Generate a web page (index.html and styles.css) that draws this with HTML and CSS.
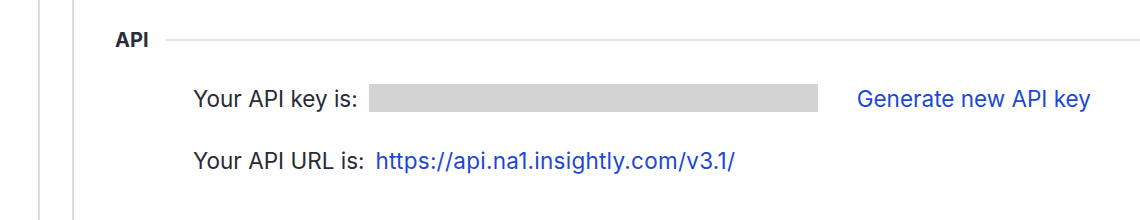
FILE: index.html
```html
<!DOCTYPE html>
<html lang="en">
<head>
    <meta charset="UTF-8">
    <title>API settings</title>
    <link rel="stylesheet" href="styles.css">
</head>
<body>
    <div class="shell">
        <div class="rail">
            <div class="panel">
                <section class="api">
                    <div class="api-head">
                        <h2>API</h2>
                        <span class="rule"></span>
                    </div>
                    <div class="api-rows">
                        <div class="api-row">
                            <span class="label">Your API key is:</span>
                            <span class="key-mask"></span>
                            <a class="link regen" href="#">Generate new API key</a>
                        </div>
                        <div class="api-row">
                            <span class="label">Your API URL is:</span>
                            <a class="link url" href="#">https://api.na1.insightly.com/v3.1/</a>
                        </div>
                    </div>
                </section>
            </div>
        </div>
    </div>
</body>
</html>
```
FILE: styles.css
```css
body {
    margin: 0;
    background-color: white;
    font-family: Inter, "Noto Sans", sans-serif;
    color: #2a2b33;
}

.shell {
    height: 220px;
    padding-left: 38px;
    overflow: hidden;
}

.rail {
    height: 100%;
    border-left: 2px solid #dcdce2;
    padding-left: 32px;
}

.panel {
    height: 100%;
    border-left: 2px solid #dcdce2;
    padding-left: 41px;
}

.api-head {
    display: flex;
    align-items: center;
    gap: 17px;
    padding-top: 28px;
}

.api-head h2 {
    margin: 0;
    font-size: 20px;
    font-weight: 700;
    line-height: 24px;
    color: #2b2d3a;
}

.rule {
    flex: 1;
    height: 2px;
    background-color: #e6e6e8;
}

.api-rows {
    padding-left: 78px;
    padding-top: 32px;
}

.api-row {
    display: flex;
    align-items: center;
    height: 28px;
    font-size: 22.5px;
    margin-bottom: 34px;
}

.label {
    margin-right: 11px;
}

.key-mask {
    width: 449px;
    height: 28px;
    background-color: #d3d3d3;
}

.link {
    color: #1d47d6;
    text-decoration: none;
}

.regen {
    margin-left: 39px;
}

.url {
    letter-spacing: 0.25px;
}
```
